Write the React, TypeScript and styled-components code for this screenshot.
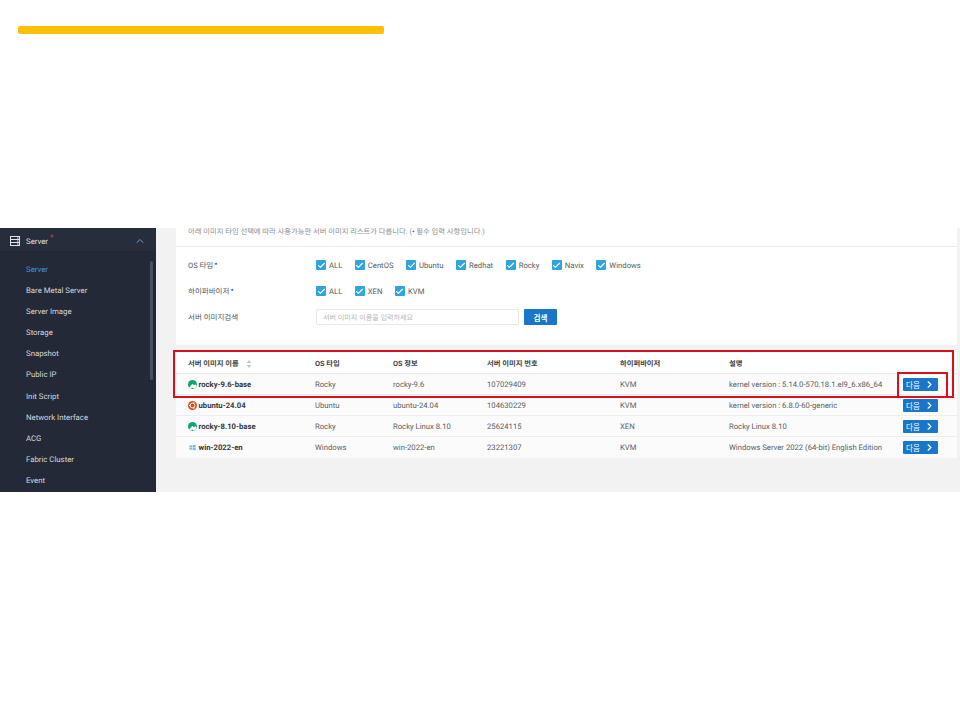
import { createGlobalStyle, styled } from 'styled-components';
import { Check, ChevronRight, ChevronUp } from 'lucide-react';

const GlobalStyle = createGlobalStyle`
  html, body { margin: 0; padding: 0; background: #fff; }
  body {
    font-family: Roboto, "Noto Sans CJK KR", sans-serif;
    text-rendering: geometricPrecision;
  }
`;

const Page = styled.div`
  position: relative;
  width: 960px;
  height: 720px;
  overflow: hidden;
  background: #fff;
  padding-top: 26px;
  box-sizing: border-box;
`;

const TitleBar = styled.div`
  width: 366px;
  height: 8px;
  margin-left: 18px;
  border-radius: 2px;
  background: #ffc107;
`;

const Shot = styled.div`
  display: flex;
  width: 960px;
  height: 264px;
  margin-top: 194px;
  overflow: hidden;
  background: #f2f2f2;
`;

const Sidebar = styled.nav`
  position: relative;
  width: 156px;
  flex: none;
  background: #232936;
`;

const SideHead = styled.div`
  display: flex;
  align-items: center;
  height: 23px;
  padding: 3px 10px 0 10px;
  box-sizing: border-box;
  background: #272e3b;
  color: #dfe3e8;
  font-size: 7.8px;
`;

const SideLabel = styled.span`
  margin-left: 6px;
  flex: 1;
  sup { color: #e03a3a; font-size: 8px; margin-left: 2px; line-height: 0; }
`;

const SideList = styled.ul`
  list-style: none;
  margin: 0;
  padding: 8px 0 0 26px;
`;

const SideItem = styled.li<{ $active?: boolean }>`
  height: 21.1px;
  line-height: 21px;
  font-size: 7.8px;
  color: ${p => (p.$active ? '#3f93e6' : '#d5d9df')};
`;

const ScrollThumb = styled.div`
  position: absolute;
  left: 150px;
  top: 33px;
  width: 3px;
  height: 119px;
  border-radius: 2px;
  background: #4a505c;
`;

const Main = styled.main`
  flex: 1;
  padding-left: 20px;
  padding-right: 3px;
`;

const Card = styled.section`
  background: #fff;
  height: 117px;
`;

const Notice = styled.div`
  height: 18px;
  padding-left: 12px;
  border-bottom: 1px solid #ececec;
  font-size: 7.3px;
  line-height: 7px;
  color: #8a8e94;
  b { color: #1a6fc0; }
`;

const FormRow = styled.div<{ $h: number }>`
  display: flex;
  align-items: center;
  height: ${p => p.$h}px;
  padding-left: 12px;
`;

const FormLabel = styled.div`
  width: 128px;
  flex: none;
  font-size: 7.5px;
  color: #555a60;
  b { color: #1a6fc0; font-size: 9px; margin-left: 1px; line-height: 0; vertical-align: 1px; }
`;

const CheckItem = styled.label`
  display: flex;
  align-items: center;
  gap: 3px;
  margin-right: 12.5px;
  font-size: 7.7px;
  color: #555a60;
`;

const CheckBox = styled.span`
  display: flex;
  align-items: center;
  justify-content: center;
  width: 10px;
  height: 10px;
  border-radius: 1px;
  background: #2ba6de;
  color: #fff;
`;

const SearchInput = styled.div`
  width: 203px;
  height: 16px;
  line-height: 15px;
  padding-left: 6px;
  box-sizing: border-box;
  border: 1px solid #e8e8e8;
  border-radius: 2px;
  font-size: 7.1px;
  color: #b4b7bb;
`;

const SearchButton = styled.button`
  width: 33px;
  height: 16px;
  margin-left: 5px;
  padding: 0;
  border: none;
  border-radius: 1px;
  background: #1a76c9;
  color: #fff;
  font: 700 7.5px Roboto, "Noto Sans CJK KR", sans-serif;
`;

const Table = styled.div`
  margin-top: 5px;
  background: #fbfbfb;
`;

const columns = '127px 78px 94px 133px 109px 174px 1fr';

const HeadRow = styled.div`
  display: grid;
  grid-template-columns: ${columns};
  align-items: center;
  height: 24px;
  padding: 5px 0 0 12px;
  background: #fff;
  border-bottom: 1px solid #e9e9e9;
  font-size: 7.3px;
  font-weight: 700;
  color: #3f4348;
  box-sizing: border-box;
`;

const SortMark = styled.span`
  display: inline-flex;
  margin-left: 7px;
  vertical-align: middle;
`;

const DataRow = styled.div`
  display: grid;
  grid-template-columns: ${columns};
  align-items: center;
  height: 21px;
  padding-left: 12px;
  border-bottom: 1px solid #eeeeee;
  box-sizing: border-box;
  font-size: 7.7px;
  color: #5a5e64;
  &:last-child { border-bottom: none; }
`;

const NameCell = styled.div`
  display: flex;
  align-items: center;
  gap: 1.5px;
  font-weight: 700;
  color: #33373c;
`;

const DescCell = styled.div`
  white-space: nowrap;
`;

const NextButton = styled.button`
  display: flex;
  align-items: center;
  justify-content: center;
  gap: 4px;
  width: 35px;
  height: 13px;
  padding: 0;
  border: none;
  border-radius: 1px;
  background: #1a76c9;
  color: #fff;
  font: 7.5px Roboto, "Noto Sans CJK KR", sans-serif;
`;

const Highlight = styled.div`
  position: absolute;
  box-sizing: border-box;
  border: 2.5px solid #d9101c;
`;

const RowHighlight = styled(Highlight)`
  left: 173px;
  top: 350px;
  width: 781px;
  height: 47.5px;
`;

const ButtonHighlight = styled(Highlight)`
  left: 897px;
  top: 372px;
  width: 51px;
  height: 25.5px;
`;

const ServerIcon = () => (
  <svg width="10" height="10" viewBox="0 0 10 10" fill="none" stroke="#dfe3e8" strokeWidth="1">
    <rect x="0.5" y="0.5" width="9" height="9" />
    <path d="M0.5 3.5h9M0.5 6.5h9" />
    <path d="M7 2h1.5M7 5h1.5M7 8h1.5" />
  </svg>
);

const RockyIcon = () => (
  <svg width="9" height="9" viewBox="0 0 10 10">
    <circle cx="5" cy="5" r="5" fill="#10a37a" />
    <path d="M1.2 8.2 5 4.2l1.7 1.7L8 4.6l1.7 1.8A5 5 0 0 1 6.4 9.8L5 8.4 3.6 9.8A5 5 0 0 1 1.2 8.2Z" fill="#fff" />
  </svg>
);

const UbuntuIcon = () => (
  <svg width="9" height="9" viewBox="0 0 10 10">
    <circle cx="5" cy="5" r="5" fill="#dd4c1f" />
    <circle cx="5" cy="5" r="2.6" fill="none" stroke="#fff" strokeWidth="1" />
    <circle cx="1.8" cy="5" r="0.9" fill="#fff" />
    <circle cx="6.6" cy="2.2" r="0.9" fill="#fff" />
    <circle cx="6.6" cy="7.8" r="0.9" fill="#fff" />
  </svg>
);

const WindowsIcon = () => (
  <svg width="9" height="9" viewBox="0 0 10 10" fill="#7db9e6">
    <path d="M1.5 2.8 4.6 2.4v2.2H1.5ZM5.2 2.3 8.5 1.9v2.7H5.2ZM1.5 5.4h3.1v2.2L1.5 7.2ZM5.2 5.4h3.3v2.7l-3.3-.4Z" />
  </svg>
);

const SortIcon = () => (
  <svg width="6" height="8" viewBox="0 0 6 8" fill="#c5c8cc">
    <path d="M3 0 5.5 3H.5ZM3 8 .5 5h5Z" />
  </svg>
);

const sideItems = ['Bare Metal Server', 'Server Image', 'Storage', 'Snapshot', 'Public IP', 'Init Script', 'Network Interface', 'ACG', 'Fabric Cluster', 'Event'];
const osTypes = ['ALL', 'CentOS', 'Ubuntu', 'Redhat', 'Rocky', 'Navix', 'Windows'];
const hypervisors = ['ALL', 'XEN', 'KVM'];

const rows = [
  { icon: <RockyIcon />, name: 'rocky-9.6-base', os: 'Rocky', info: 'rocky-9.6', no: '107029409', hv: 'KVM', desc: 'kernel version : 5.14.0-570.18.1.el9_6.x86_64' },
  { icon: <UbuntuIcon />, name: 'ubuntu-24.04', os: 'Ubuntu', info: 'ubuntu-24.04', no: '104630229', hv: 'KVM', desc: 'kernel version : 6.8.0-60-generic' },
  { icon: <RockyIcon />, name: 'rocky-8.10-base', os: 'Rocky', info: 'Rocky Linux 8.10', no: '25624115', hv: 'XEN', desc: 'Rocky Linux 8.10' },
  { icon: <WindowsIcon />, name: 'win-2022-en', os: 'Windows', info: 'win-2022-en', no: '23221307', hv: 'KVM', desc: 'Windows Server 2022 (64-bit) English Edition' },
];

const CheckGroup = ({ items }: { items: string[] }) => (
  <>
    {items.map(item => (
      <CheckItem key={item}>
        <CheckBox><Check size={9} strokeWidth={3} /></CheckBox>
        {item}
      </CheckItem>
    ))}
  </>
);

export default function App() {
  return (
    <Page>
      <GlobalStyle />
      <TitleBar />
      <Shot>
        <Sidebar>
          <SideHead>
            <ServerIcon />
            <SideLabel>Server<sup>*</sup></SideLabel>
            <ChevronUp size={12} color="#5a9fe0" strokeWidth={2} />
          </SideHead>
          <SideList>
            <SideItem $active>Server</SideItem>
            {sideItems.map(item => <SideItem key={item}>{item}</SideItem>)}
          </SideList>
          <ScrollThumb />
        </Sidebar>
        <Main>
          <Card>
            <Notice>아래 이미지 타입 선택에 따라 사용가능한 서버 이미지 리스트가 다릅니다. (<b>•</b> 필수 입력 사항입니다.)</Notice>
            <FormRow $h={36}>
              <FormLabel>OS 타입<b>•</b></FormLabel>
              <CheckGroup items={osTypes} />
            </FormRow>
            <FormRow $h={16}>
              <FormLabel>하이퍼바이저<b>•</b></FormLabel>
              <CheckGroup items={hypervisors} />
            </FormRow>
            <FormRow $h={36}>
              <FormLabel>서버 이미지검색</FormLabel>
              <SearchInput>서버 이미지 이름을 입력하세요</SearchInput>
              <SearchButton>검색</SearchButton>
            </FormRow>
          </Card>
          <Table>
            <HeadRow>
              <div>서버 이미지 이름<SortMark><SortIcon /></SortMark></div>
              <div>OS 타입</div>
              <div>OS 정보</div>
              <div>서버 이미지 번호</div>
              <div>하이퍼바이저</div>
              <div>설명</div>
            </HeadRow>
            {rows.map(row => (
              <DataRow key={row.name}>
                <NameCell>{row.icon}{row.name}</NameCell>
                <div>{row.os}</div>
                <div>{row.info}</div>
                <div>{row.no}</div>
                <div>{row.hv}</div>
                <DescCell>{row.desc}</DescCell>
                <NextButton>다음<ChevronRight size={11} strokeWidth={2.5} /></NextButton>
              </DataRow>
            ))}
          </Table>
        </Main>
      </Shot>
      <RowHighlight />
      <ButtonHighlight />
    </Page>
  );
}
